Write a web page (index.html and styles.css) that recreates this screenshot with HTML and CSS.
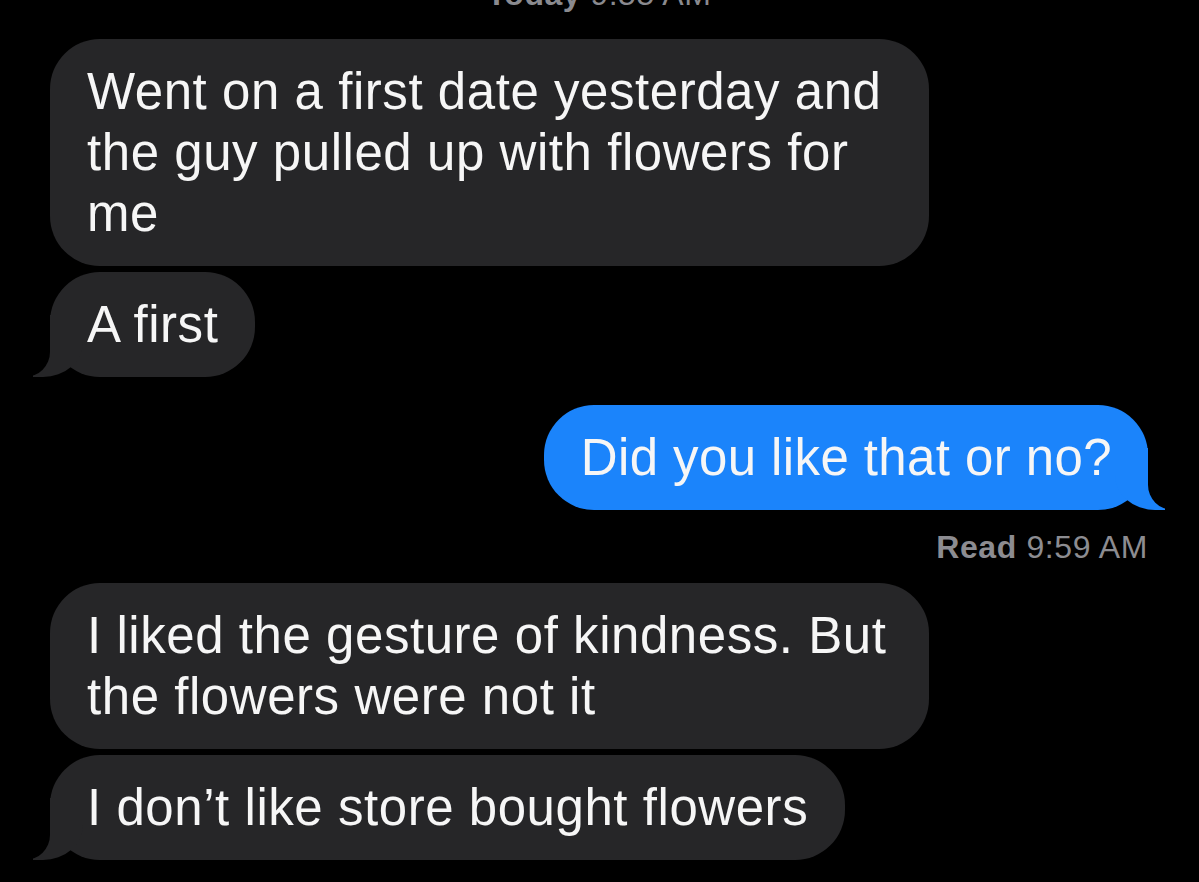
FILE: index.html
```html
<!DOCTYPE html>
<html lang="en">
<head>
<meta charset="utf-8">
<title>Messages</title>
<link rel="stylesheet" href="styles.css">
</head>
<body>
<main class="thread">
  <div class="stamp"><b>Today</b> 9:55 AM</div>
  <div class="bubble them">Went on a first date yesterday and the guy pulled up with flowers for me</div>
  <div class="bubble them tail gap-s">A first</div>
  <div class="bubble me tail gap-l">Did you like that or no?</div>
  <div class="receipt"><b>Read</b> 9:59 AM</div>
  <div class="bubble them gap-m">I liked the gesture of kindness. But the flowers were not it</div>
  <div class="bubble them tail gap-s">I don’t like store bought flowers</div>
</main>
</body>
</html>
```

FILE: styles.css
```css
html, body {
  margin: 0;
  padding: 0;
  background: #000;
  height: 100%;
  overflow: hidden;
}

.thread {
  display: flex;
  flex-direction: column;
  padding: 0 51px 0 50px;
  font-family: "Liberation Sans", Arial, sans-serif;
}

.stamp {
  margin-top: -26px;
  height: 40px;
  line-height: 40px;
  font-size: 32px;
  letter-spacing: 0.5px;
  color: #8a8a8f;
  text-align: center;
  margin-bottom: 25px;
}

.stamp b, .receipt b {
  font-weight: 700;
}

.bubble {
  position: relative;
  box-sizing: border-box;
  max-width: 879px;
  width: fit-content;
  padding: 22px 37px;
  border-radius: 50px;
  font-size: 51px;
  line-height: 61px;
  letter-spacing: 0.55px;
  color: #f6f6f6;
}

.them {
  align-self: flex-start;
  background: #262628;
}

.me {
  align-self: flex-end;
  background: #1b84fb;
  letter-spacing: 0.4px;
  padding: 22px 36px 22px 37px;
}

.gap-s { margin-top: 6px; }
.gap-m { margin-top: 16px; }
.gap-l { margin-top: 28px; }

.tail::before,
.tail::after {
  content: "";
  position: absolute;
  bottom: 0;
  height: 62px;
}

.them.tail::before {
  left: -17px;
  width: 50px;
  background: #262628;
  border-bottom-right-radius: 40px 35px;
}

.them.tail::after {
  left: -65px;
  width: 65px;
  background: #000;
  border-bottom-right-radius: 25px;
}

.me.tail::before {
  right: -17px;
  width: 50px;
  background: #1b84fb;
  border-bottom-left-radius: 40px 35px;
}

.me.tail::after {
  right: -65px;
  width: 65px;
  background: #000;
  border-bottom-left-radius: 25px;
}

.receipt {
  align-self: flex-end;
  margin-top: 17px;
  font-size: 32px;
  line-height: 40px;
  letter-spacing: 0.6px;
  color: #8c8c91;
}
```
